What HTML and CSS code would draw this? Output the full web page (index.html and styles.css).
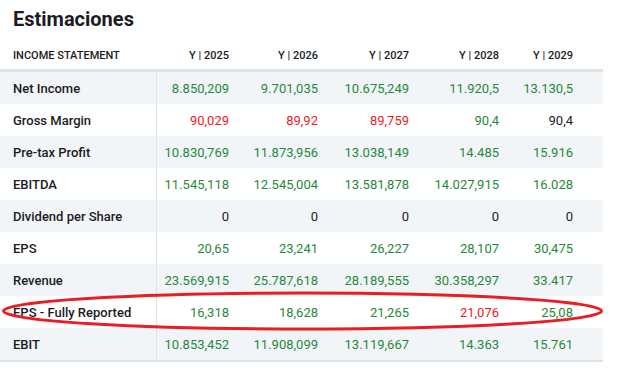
FILE: index.html
```html
<!DOCTYPE html>
<html lang="es">
<head>
  <meta charset="UTF-8">
  <meta name="viewport" content="width=device-width, initial-scale=1.0">
  <title>Estimaciones</title>
  <link rel="stylesheet" href="styles.css">
</head>
<body>
  <h2 class="title">Estimaciones</h2>

  <div class="table-wrap">
    <table class="estimates">
      <colgroup>
        <col class="col-label">
        <col class="col-2025">
        <col class="col-2026">
        <col class="col-2027">
        <col class="col-2028">
        <col class="col-2029">
      </colgroup>
      <thead>
        <tr>
          <th>Income Statement</th>
          <th>Y | 2025</th>
          <th>Y | 2026</th>
          <th>Y | 2027</th>
          <th>Y | 2028</th>
          <th>Y | 2029</th>
        </tr>
      </thead>
      <tbody>
        <tr>
          <td>Net Income</td>
          <td class="up">8.850,209</td>
          <td class="up">9.701,035</td>
          <td class="up">10.675,249</td>
          <td class="up">11.920,5</td>
          <td class="up">13.130,5</td>
        </tr>
        <tr>
          <td>Gross Margin</td>
          <td class="down">90,029</td>
          <td class="down">89,92</td>
          <td class="down">89,759</td>
          <td class="up">90,4</td>
          <td>90,4</td>
        </tr>
        <tr>
          <td>Pre-tax Profit</td>
          <td class="up">10.830,769</td>
          <td class="up">11.873,956</td>
          <td class="up">13.038,149</td>
          <td class="up">14.485</td>
          <td class="up">15.916</td>
        </tr>
        <tr>
          <td>EBITDA</td>
          <td class="up">11.545,118</td>
          <td class="up">12.545,004</td>
          <td class="up">13.581,878</td>
          <td class="up">14.027,915</td>
          <td class="up">16.028</td>
        </tr>
        <tr>
          <td>Dividend per Share</td>
          <td>0</td>
          <td>0</td>
          <td>0</td>
          <td>0</td>
          <td>0</td>
        </tr>
        <tr>
          <td>EPS</td>
          <td class="up">20,65</td>
          <td class="up">23,241</td>
          <td class="up">26,227</td>
          <td class="up">28,107</td>
          <td class="up">30,475</td>
        </tr>
        <tr>
          <td>Revenue</td>
          <td class="up">23.569,915</td>
          <td class="up">25.787,618</td>
          <td class="up">28.189,555</td>
          <td class="up">30.358,297</td>
          <td class="up">33.417</td>
        </tr>
        <tr>
          <td>EPS - Fully Reported</td>
          <td class="up">16,318</td>
          <td class="up">18,628</td>
          <td class="up">21,265</td>
          <td class="down">21,076</td>
          <td class="up">25,08</td>
        </tr>
        <tr>
          <td>EBIT</td>
          <td class="up">10.853,452</td>
          <td class="up">11.908,099</td>
          <td class="up">13.119,667</td>
          <td class="up">14.363</td>
          <td class="up">15.761</td>
        </tr>
      </tbody>
    </table>

    <!-- hand-drawn highlight around the EPS - Fully Reported row -->
    <svg class="highlight" width="606" height="44" viewBox="0 0 606 44">
      <ellipse cx="302.5" cy="22" rx="299" ry="18" fill="none" stroke="#ec1c24" stroke-width="3"/>
    </svg>
  </div>
</body>
</html>
```

FILE: styles.css
```css
:root {
  --text-color: #1b1b24;
  --up-color: #1f8a3a;
  --down-color: #ef1a24;
  --row-alt: #f2f5f8;
  --line: #dfe2e6;
}

body {
  margin: 0;
  font-family: Roboto, "Liberation Sans", Arial, sans-serif;
  color: var(--text-color);
  background: white;
}

.title {
  margin: 0;
  padding: 6px 13px 0;
  height: 30px;
  font-size: 20px;
  font-weight: 700;
  line-height: 26px;
}

.table-wrap {
  position: relative;
  width: 603px;
  padding-top: 5px;
}

.estimates {
  width: 603px;
  border-collapse: collapse;
  table-layout: fixed;
  font-size: 13px;
}

.col-label { width: 156px; }
.col-2025 { width: 83px; }
.col-2026 { width: 89px; }
.col-2027 { width: 91px; }
.col-2028 { width: 90px; }
.col-2029 { width: 94px; }

.estimates th {
  height: 28px;
  padding: 0 10px 0 0;
  font-size: 11px;
  font-weight: 500;
  text-align: right;
  border-bottom: 3px solid #e1e1e1;
  vertical-align: middle;
}

.estimates th:first-child {
  text-transform: uppercase;
  text-align: left;
  padding-left: 13px;
}

.estimates td {
  height: 32px;
  padding: 0 10px 0 0;
  text-align: right;
  vertical-align: middle;
  white-space: nowrap;
}

.estimates th:last-child,
.estimates td:last-child {
  padding-right: 30px;
}

.estimates td:first-child {
  text-align: left;
  padding-left: 13px;
  font-weight: 500;
  border-right: 1px solid var(--line);
}

.estimates tbody tr:nth-child(odd) {
  background: var(--row-alt);
}

.estimates tbody tr:last-child td {
  border-bottom: 2px solid #e1e1e1;
}

.up { color: var(--up-color); }
.down { color: var(--down-color); }

.highlight {
  position: absolute;
  left: 0;
  top: 253px;
  pointer-events: none;
}
```
